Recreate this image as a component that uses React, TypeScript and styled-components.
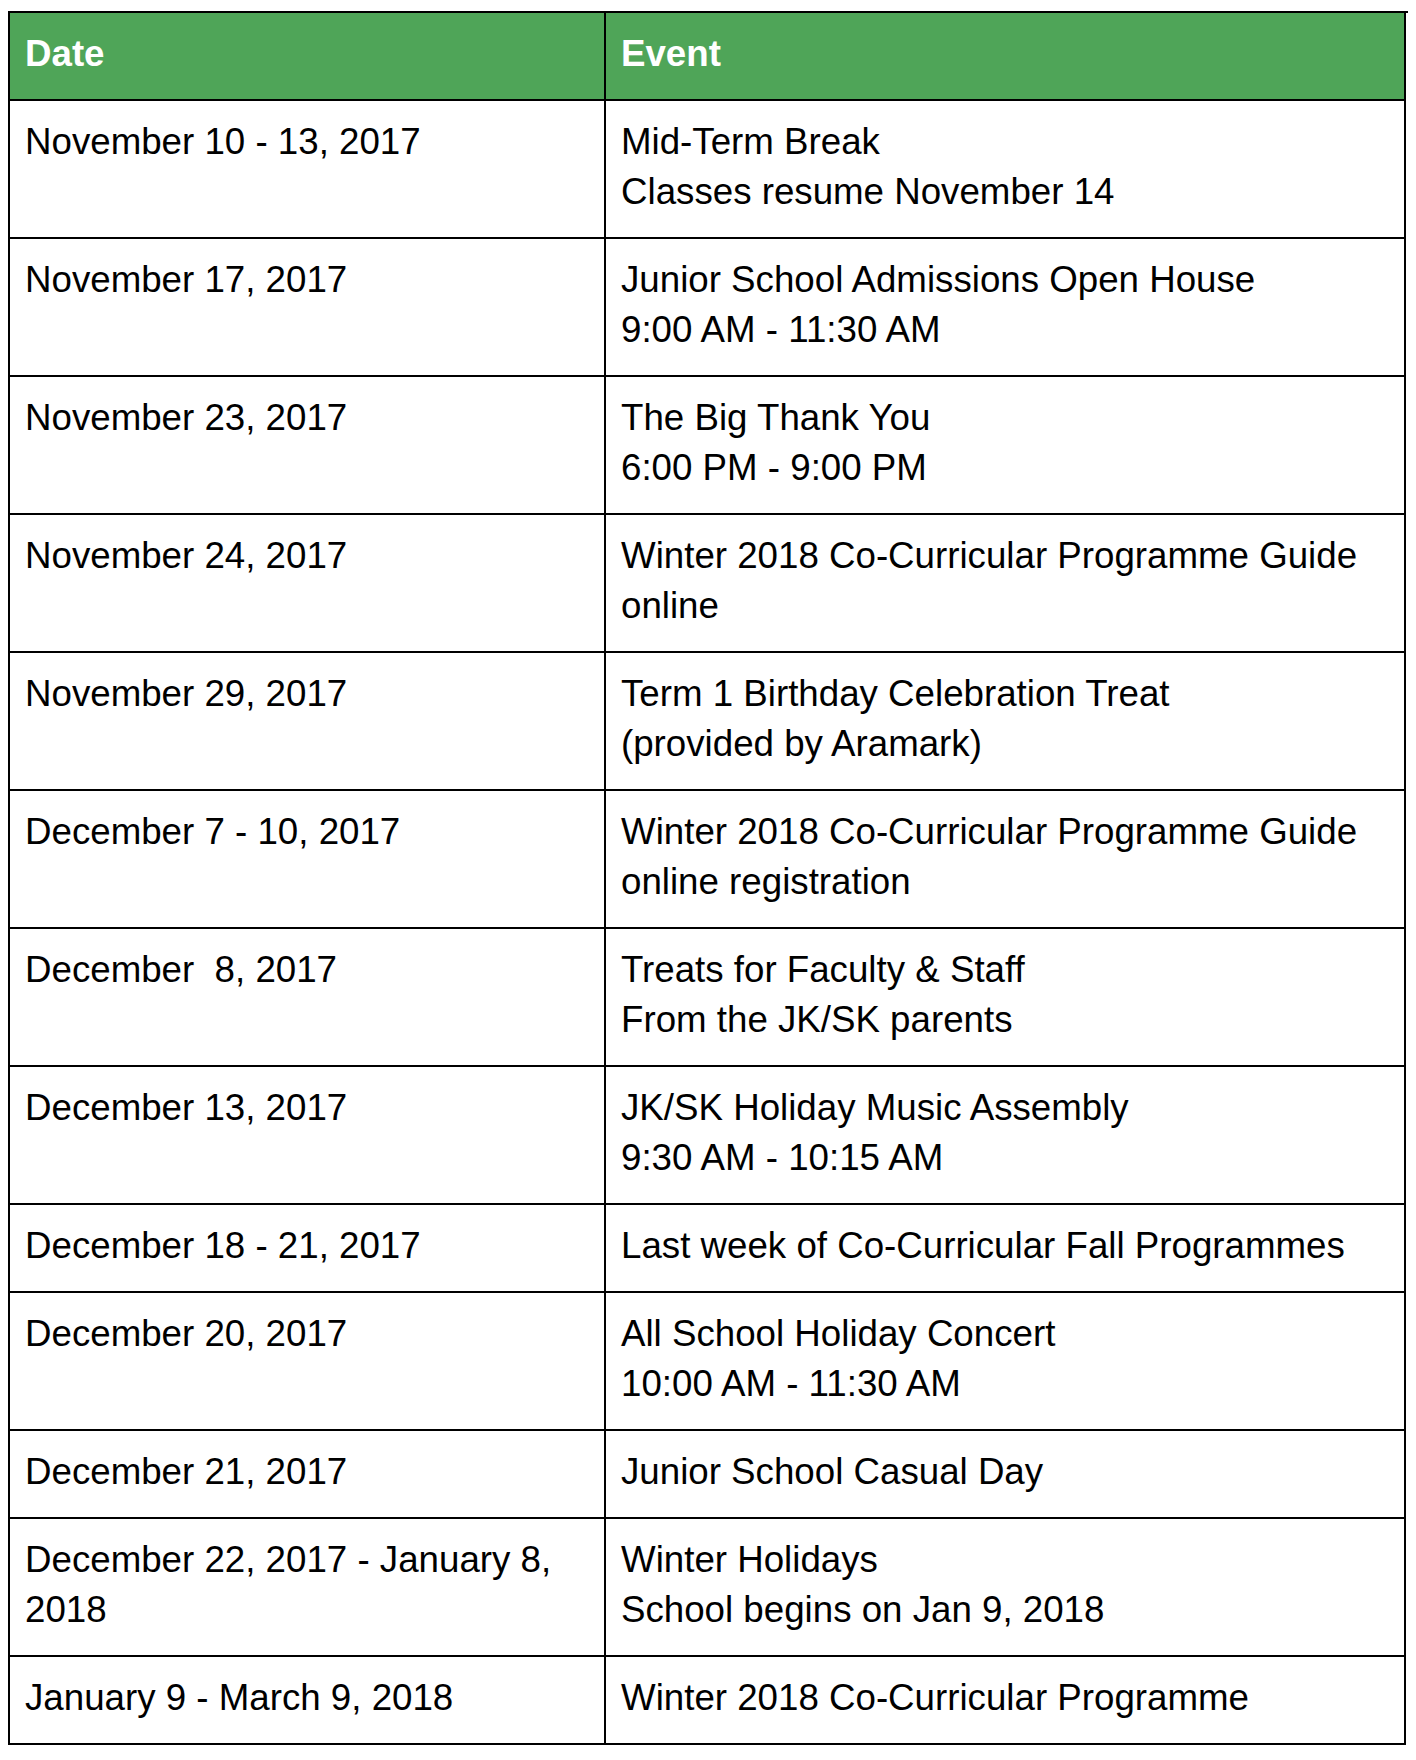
import React from "react";
import styled, { createGlobalStyle } from "styled-components";

const Global = createGlobalStyle`
  html, body { margin: 0; padding: 0; background: #ffffff; }
  body { font-family: "Liberation Sans", Arial, sans-serif; color: #000; }
`;

const Page = styled.div`
  padding: 11px 0 0 8px;
`;

const Table = styled.div`
  display: grid;
  grid-template-columns: 596px 800px;
  width: 1398px;
  border-left: 2px solid #000;
  border-top: 2px solid #000;
`;

const Cell = styled.div<{ $head?: boolean }>`
  box-sizing: border-box;
  border-right: 2px solid #000;
  border-bottom: 2px solid #000;
  padding: 16px 16px 20px 15px;
  font-size: 36.7px;
  line-height: 50px;
  white-space: pre-wrap;
  background: ${(p) => (p.$head ? "#4fa558" : "#ffffff")};
  color: ${(p) => (p.$head ? "#ffffff" : "#000000")};
  font-weight: ${(p) => (p.$head ? 700 : 400)};
`;

const Line = styled.div``;

const rows: { date: string; event: string[] }[] = [
  { date: "November 10 - 13, 2017", event: ["Mid-Term Break", "Classes resume November 14"] },
  { date: "November 17, 2017", event: ["Junior School Admissions Open House", "9:00 AM - 11:30 AM"] },
  { date: "November 23, 2017", event: ["The Big Thank You", "6:00 PM - 9:00 PM"] },
  { date: "November 24, 2017", event: ["Winter 2018 Co-Curricular Programme Guide online"] },
  { date: "November 29, 2017", event: ["Term 1 Birthday Celebration Treat", "(provided by Aramark)"] },
  { date: "December 7 - 10, 2017", event: ["Winter 2018 Co-Curricular Programme Guide online registration"] },
  { date: "December  8, 2017", event: ["Treats for Faculty & Staff", "From the JK/SK parents"] },
  { date: "December 13, 2017", event: ["JK/SK Holiday Music Assembly", "9:30 AM - 10:15 AM"] },
  { date: "December 18 - 21, 2017", event: ["Last week of Co-Curricular Fall Programmes"] },
  { date: "December 20, 2017", event: ["All School Holiday Concert", "10:00 AM - 11:30 AM"] },
  { date: "December 21, 2017", event: ["Junior School Casual Day"] },
  { date: "December 22, 2017 - January 8, 2018", event: ["Winter Holidays", "School begins on Jan 9, 2018"] },
  { date: "January 9 - March 9, 2018", event: ["Winter 2018 Co-Curricular Programme"] },
];

export default function App() {
  return (
    <>
      <Global />
      <Page>
        <Table>
          <Cell $head>Date</Cell>
          <Cell $head>Event</Cell>
          {rows.map((r, i) => (
            <React.Fragment key={i}>
              <Cell>{r.date}</Cell>
              <Cell>
                {r.event.map((l, j) => (
                  <Line key={j}>{l}</Line>
                ))}
              </Cell>
            </React.Fragment>
          ))}
        </Table>
      </Page>
    </>
  );
}
